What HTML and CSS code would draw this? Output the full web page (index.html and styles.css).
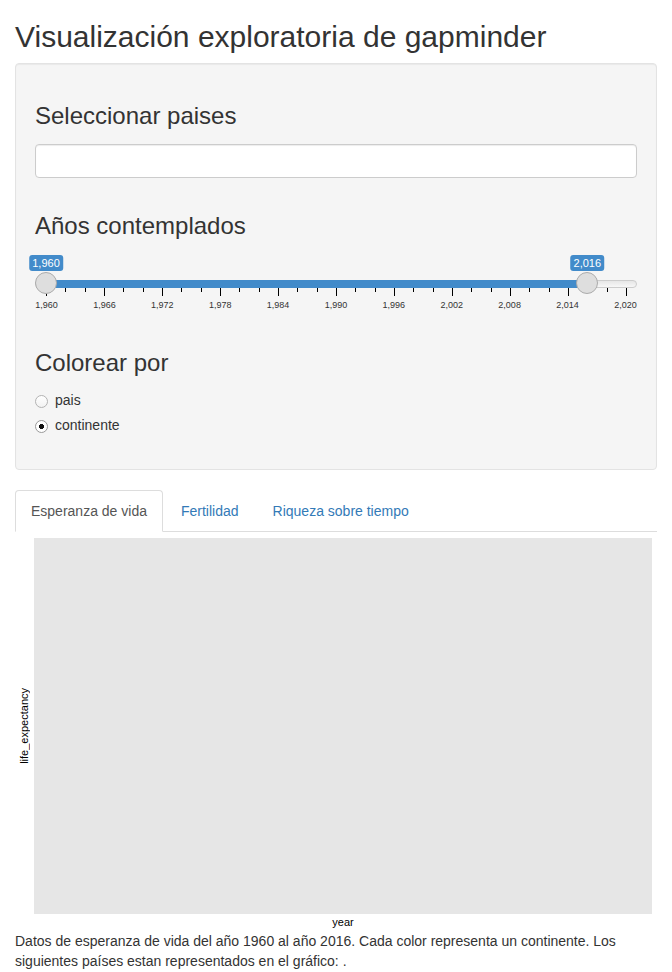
FILE: index.html
```html
<!DOCTYPE html>
<html lang="es">
<head>
<meta charset="utf-8">
<title>Visualización exploratoria de gapminder</title>
<link rel="stylesheet" href="styles.css">
</head>
<body>
<div class="container">
  <h2 class="title">Visualización exploratoria de gapminder</h2>
  <div class="well">
    <div class="form-group">
      <label class="control-label"><span class="h3">Seleccionar paises</span></label>
      <div class="selectize-input"></div>
    </div>
    <div class="form-group">
      <label class="control-label"><span class="h3">Años contemplados</span></label>
      <div class="irs">
        <div class="irs-line"></div>
        <div class="irs-bar" style="--from: 0; --to: 0.9333"></div>
        <div class="irs-grid">
          <div class="ticks">
            <i class="big"></i><i></i><i></i><i class="big"></i><i></i><i></i><i class="big"></i><i></i><i></i><i class="big"></i><i></i><i></i><i class="big"></i><i></i><i></i><i class="big"></i><i></i><i></i><i class="big"></i><i></i><i></i><i class="big"></i><i></i><i></i><i class="big"></i><i></i><i></i><i class="big"></i><i></i><i></i><i class="big"></i>
          </div>
          <div class="grid-labels">
            <span><b>1,960</b></span><span><b>1,966</b></span><span><b>1,972</b></span><span><b>1,978</b></span><span><b>1,984</b></span><span><b>1,990</b></span><span><b>1,996</b></span><span><b>2,002</b></span><span><b>2,008</b></span><span><b>2,014</b></span><span><b>2,020</b></span>
          </div>
        </div>
        <span class="irs-handle" style="--p: 0"></span>
        <span class="irs-handle" style="--p: 0.9333"></span>
        <span class="irs-label" style="--p: 0">1,960</span>
        <span class="irs-label" style="--p: 0.9333">2,016</span>
      </div>
    </div>
    <div class="form-group">
      <label class="control-label"><span class="h3">Colorear por</span></label>
      <div class="options">
        <div class="radio"><label><input type="radio" name="color" value="pais"><span>pais</span></label></div>
        <div class="radio"><label><input type="radio" name="color" value="continente" checked><span>continente</span></label></div>
      </div>
    </div>
  </div>

  <ul class="nav-tabs">
    <li class="active"><a href="#">Esperanza de vida</a></li>
    <li><a href="#">Fertilidad</a></li>
    <li><a href="#">Riqueza sobre tiempo</a></li>
  </ul>
  <div class="tab-content">
    <div class="plot">
      <div class="ylab"><span>life_expectancy</span></div>
      <div class="panel"></div>
      <div class="xlab">year</div>
    </div>
    <p class="caption">Datos de esperanza de vida del año 1960 al año 2016. Cada color representa un continente. Los siguientes países estan representados en el gráfico: .</p>
  </div>
</div>
</body>
</html>
```

FILE: styles.css
```css
* { box-sizing: border-box; }

body {
  margin: 0;
  font-family: "Liberation Sans", Arial, Helvetica, sans-serif;
  font-size: 14px;
  line-height: 1.42857;
  color: #333;
  background: #fff;
}

.container {
  padding: 0 15px;
}

.title {
  margin: 20px 0 10px;
  font-size: 30px;
  line-height: 1.1;
  font-weight: 400;
}

.well {
  background: #f5f5f5;
  border: 1px solid #e3e3e3;
  border-radius: 4px;
  box-shadow: inset 0 1px 1px rgba(0, 0, 0, 0.05);
  padding: 19px;
  margin-bottom: 20px;
}

.form-group {
  margin-bottom: 15px;
}
.form-group:last-child {
  margin-bottom: 14px;
}

.control-label {
  display: inline-block;
  max-width: 100%;
  margin-bottom: 5px;
}

.h3 {
  display: block;
  margin: 20px 0 10px;
  font-size: 24px;
  line-height: 1.1;
  font-weight: 400;
}

.selectize-input {
  height: 34px;
  background: #fff;
  border: 1px solid #ccc;
  border-radius: 4px;
  box-shadow: inset 0 1px 1px rgba(0, 0, 0, 0.075);
}

/* slider */
.irs {
  position: relative;
  height: 60px;
}
.irs-line {
  position: absolute;
  left: 0;
  right: 0;
  top: 25px;
  height: 8px;
  background: linear-gradient(to bottom, #dedede -50%, #fff 150%);
  border: 1px solid #ccc;
  border-radius: 8px;
}
.irs-bar {
  position: absolute;
  top: 25px;
  height: 8px;
  left: calc(11px + (100% - 22px) * var(--from));
  width: calc((100% - 22px) * (var(--to) - var(--from)));
  background: #428bca;
  border-top: 1px solid #428bca;
  border-bottom: 1px solid #428bca;
}
.irs-handle {
  position: absolute;
  top: 17px;
  left: calc((100% - 22px) * var(--p));
  width: 22px;
  height: 22px;
  border: 1px solid #ababab;
  background: #dedede;
  border-radius: 50%;
}
.irs-label {
  position: absolute;
  top: 0;
  left: calc(11px + (100% - 22px) * var(--p));
  transform: translateX(-50%);
  color: #fff;
  background: #428bca;
  border-radius: 3px;
  padding: 1px 3px;
  font-size: 11px;
  line-height: 1.333;
  white-space: nowrap;
}
.irs-grid {
  position: absolute;
  left: 11px;
  right: 11px;
  bottom: 0;
  height: 27px;
}
.ticks {
  display: flex;
  justify-content: space-between;
  align-items: flex-start;
  margin-right: -1px;
}
.ticks i {
  display: block;
  width: 1px;
  height: 4px;
  background: #000;
}
.ticks i.big {
  height: 8px;
}
.grid-labels {
  display: flex;
  justify-content: space-between;
  margin-top: 5px;
}
.grid-labels span {
  width: 1px;
  display: flex;
  justify-content: center;
}
.grid-labels b {
  font-weight: 400;
  font-size: 9px;
  line-height: 9px;
  color: #333;
  white-space: nowrap;
}

/* radios */
.options {
  margin-top: -10px;
}
.radio {
  position: relative;
  display: block;
  margin: 10px 0;
}
.radio + .radio {
  margin-top: -5px;
}
.radio label {
  display: block;
  min-height: 20px;
  padding-left: 20px;
  margin-bottom: 0;
  font-weight: 400;
}
.radio input {
  -webkit-appearance: none;
  appearance: none;
  position: absolute;
  margin: 4px 0 0 -20px;
  width: 13px;
  height: 13px;
  border: 1px solid #b3b3b3;
  border-radius: 50%;
  background: linear-gradient(#fff, #f2f2f2);
}
.radio input:checked {
  border-color: #9a9a9a;
  background: radial-gradient(circle, #111 0 2.3px, #fff 2.8px);
}

/* tabs */
.nav-tabs {
  display: flex;
  list-style: none;
  margin: 0;
  padding: 0;
  border-bottom: 1px solid #ddd;
}
.nav-tabs li {
  margin-bottom: -1px;
}
.nav-tabs a {
  display: block;
  margin-right: 2px;
  padding: 10px 15px;
  line-height: 20px;
  border: 1px solid transparent;
  border-radius: 4px 4px 0 0;
  color: #337ab7;
  text-decoration: none;
}
.nav-tabs li.active a {
  color: #555;
  background: #fff;
  border-color: #ddd #ddd transparent;
}

/* plot */
.plot {
  height: 400px;
  display: grid;
  grid-template-columns: 19px 1fr 5px;
  grid-template-rows: 6px 1fr 18px;
}
.panel {
  grid-column: 2;
  grid-row: 2;
  background: #e6e6e6;
}
.ylab {
  grid-column: 1;
  grid-row: 2;
  display: flex;
  align-items: center;
  justify-content: center;
}
.ylab span {
  writing-mode: vertical-rl;
  transform: rotate(180deg);
  font-size: 11px;
  line-height: 11px;
  color: #000;
}
.xlab {
  grid-column: 2;
  grid-row: 3;
  text-align: center;
  font-size: 11px;
  line-height: 11px;
  padding-top: 3px;
  color: #000;
}
.caption {
  margin: 0;
}
```
